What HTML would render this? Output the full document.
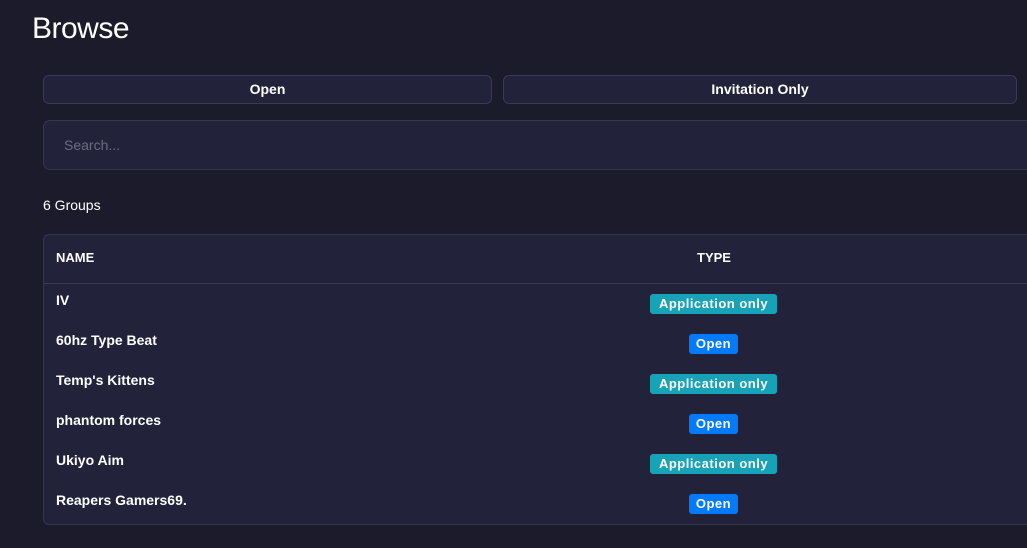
<!DOCTYPE html>
<html><head><style>
*{box-sizing:border-box;margin:0;padding:0}
body{width:1027px;height:548px;overflow:hidden;background:#1b1b2b;font-family:"Liberation Sans",sans-serif;color:#fff;position:relative}
.a{position:absolute}
h1{position:absolute;left:32px;top:12px;font-size:30px;font-weight:normal;letter-spacing:-0.5px}
.btn{position:absolute;top:75px;height:29px;background:#22223a;border:1px solid #3a3a52;border-radius:6px;font-size:14px;font-weight:bold;text-align:center;line-height:27px}
.search{left:43px;top:120px;width:1000px;height:50px;background:#22223a;border:1px solid #35354c;border-radius:7px;font-size:14px;color:#6c6c80;padding:0 0 0 20px;line-height:48px}
.tbl{left:43px;top:234px;width:1000px;height:291px;background:#22223a;border:1px solid #35354c;border-radius:6px}
.hd{position:absolute;left:0;top:0;width:100%;height:49px;border-bottom:1px solid #3a3a52;font-size:13px;font-weight:bold}
.r{position:absolute;left:12px;font-size:14px;font-weight:bold}
.b{position:absolute;height:20px;border-radius:3px;font-size:13px;font-weight:bold;line-height:20px;text-align:center;letter-spacing:0.5px}
.ap{background:#17a2b8;left:606px;width:127px}
.op{background:#007bff;left:645px;width:49px}
</style></head><body>
<h1>Browse</h1>
<div class="btn" style="left:43px;width:449px">Open</div>
<div class="btn" style="left:503px;width:514px">Invitation Only</div>
<div class="a search">Search...</div>
<div class="a" style="left:43px;top:197px;font-size:14px">6 Groups</div>
<div class="a tbl">
<div class="hd"><span class="a" style="left:12px;top:15px">NAME</span><span class="a" style="left:653px;top:15px">TYPE</span></div>
<div class="r" style="top:57px">IV</div><div class="b ap" style="top:59px">Application only</div>
<div class="r" style="top:97px">60hz Type Beat</div><div class="b op" style="top:99px">Open</div>
<div class="r" style="top:137px">Temp's Kittens</div><div class="b ap" style="top:139px">Application only</div>
<div class="r" style="top:177px">phantom forces</div><div class="b op" style="top:179px">Open</div>
<div class="r" style="top:217px">Ukiyo Aim</div><div class="b ap" style="top:219px">Application only</div>
<div class="r" style="top:257px">Reapers Gamers69.</div><div class="b op" style="top:259px">Open</div>
</div>
</body></html>
